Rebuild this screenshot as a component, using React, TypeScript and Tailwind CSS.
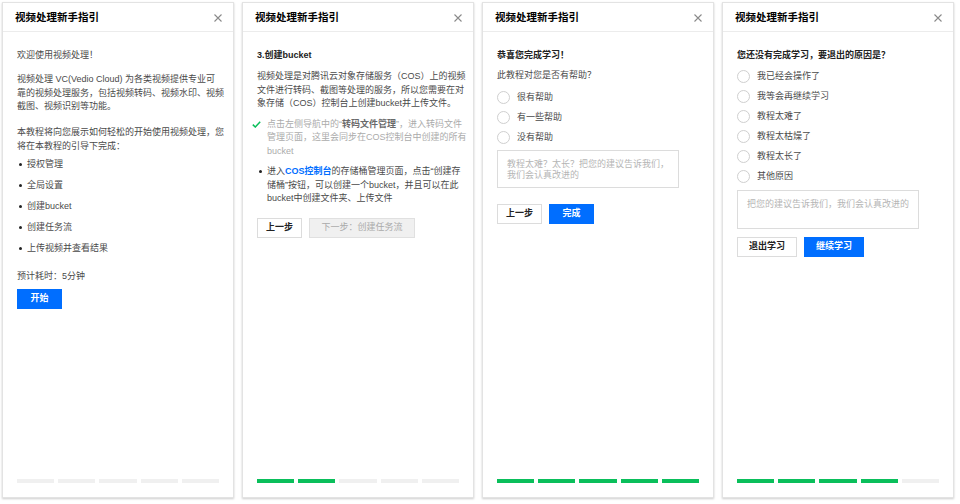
import { ReactNode } from 'react';

function CloseIcon() {
    return (
        <svg width="8" height="8" viewBox="0 0 8 8" className="shrink-0">
            <path d="M0.5 0.5 L7.5 7.5 M7.5 0.5 L0.5 7.5" stroke="#8a8a8a" strokeWidth="1.1" />
        </svg>
    );
}

function CheckIcon() {
    return (
        <svg width="9" height="7" viewBox="0 0 9 7">
            <path d="M0.8 3.6 L3.3 6 L8.2 0.8" fill="none" stroke="#0abf5b" strokeWidth="1.5" />
        </svg>
    );
}

function Panel({ done, children }: { done: number; children: ReactNode }) {
    return (
        <div className="flex h-[496px] w-[232px] flex-col border border-[#e3e3e3] bg-white shadow-[0_1px_2px_rgba(0,0,0,0.2)]">
            <div className="flex h-[29px] items-center justify-between border-b border-[#ececec] pl-[12px] pr-[11px] pt-[1px]">
                <span className="text-[10.5px] font-bold text-black">视频处理新手指引</span>
                <CloseIcon />
            </div>
            <div className="flex-1 px-[14px] pt-[17px] text-[9px] leading-[13.5px] text-[#4a4a4a]">{children}</div>
            <div className="flex gap-[4px] px-[14px] pb-[14px]">
                {[0, 1, 2, 3, 4].map((i) => (
                    <div key={i} className={`h-[4px] flex-1 ${i < done ? 'bg-[#0abf5b]' : 'bg-[#f0f0f0]'}`} />
                ))}
            </div>
        </div>
    );
}

function Bullet({ children, className = '' }: { children: ReactNode; className?: string }) {
    return (
        <div className={`flex ${className}`}>
            <span className="flex h-[13.5px] w-[10px] shrink-0 items-center">
                <span className="ml-[2px] h-[3px] w-[3px] rounded-full bg-[#222]" />
            </span>
            <div className="whitespace-nowrap">{children}</div>
        </div>
    );
}

function Radio({ label }: { label: string }) {
    return (
        <div className="flex h-[20px] items-center gap-[7px]">
            <span className="h-[13px] w-[13px] shrink-0 rounded-full border border-[#cfcfcf] bg-white" />
            <span>{label}</span>
        </div>
    );
}

function Btn({ children, primary, disabled, w }: { children: ReactNode; primary?: boolean; disabled?: boolean; w: string }) {
    let cls = 'border-[#dcdcdc] bg-white text-[#222] font-bold';
    if (primary) cls = 'border-[#006eff] bg-[#006eff] text-white font-bold';
    if (disabled) cls = 'border-[#e0e0e0] bg-[#f0f0f0] text-[#aaa]';
    return (
        <button className={`flex h-[20px] ${w} items-center justify-center border text-[9px] ${cls}`}>{children}</button>
    );
}

export default function App() {
    return (
        <div className="flex h-[504px] w-[960px] gap-[8px] bg-white pl-[2px] pt-[2px] font-['Liberation_Sans','Noto_Sans_CJK_SC',sans-serif]">
            <Panel done={0}>
                <p>欢迎使用视频处理！</p>
                <p className="mt-[10.5px] whitespace-nowrap">
                    视频处理 VC(Vedio Cloud) 为各类视频提供专业可<br />
                    靠的视频处理服务，包括视频转码、视频水印、视频<br />
                    截图、视频识别等功能。
                </p>
                <p className="mt-[12.5px] whitespace-nowrap">
                    本教程将向您展示如何轻松的开始使用视频处理，您<br />
                    将在本教程的引导下完成：
                </p>
                <Bullet className="mt-[5px]">授权管理</Bullet>
                <Bullet className="mt-[7.5px]">全局设置</Bullet>
                <Bullet className="mt-[7.5px]">创建bucket</Bullet>
                <Bullet className="mt-[7.5px]">创建任务流</Bullet>
                <Bullet className="mt-[7.5px]">上传视频并查看结果</Bullet>
                <p className="mt-[14.5px]">预计耗时：5分钟</p>
                <div className="mt-[5px]">
                    <Btn primary w="w-[45px]">开始</Btn>
                </div>
            </Panel>

            <Panel done={2}>
                <p className="font-bold text-[#222]">3.创建bucket</p>
                <p className="mt-[7.5px] whitespace-nowrap">
                    视频处理是对腾讯云对象存储服务（COS）上的视频<br />
                    文件进行转码、截图等处理的服务，所以您需要在对<br />
                    象存储（COS）控制台上创建bucket并上传文件。
                </p>
                <div className="mt-[7px] flex">
                    <span className="-ml-[5px] mr-[6px] flex h-[13.5px] w-[9px] shrink-0 items-center">
                        <CheckIcon />
                    </span>
                    <div className="whitespace-nowrap text-[#ababab]">
                        点击左侧导航中的“<span className="font-bold text-[#6a6a6a]">转码文件管理</span>”，进入转码文件<br />
                        管理页面，这里会同步在COS控制台中创建的所有<br />
                        bucket
                    </div>
                </div>
                <Bullet className="mt-[7px]">
                    进入<span className="font-bold text-[#006eff]">COS控制台</span>的存储桶管理页面，点击“创建存<br />
                    储桶”按钮，可以创建一个bucket，并且可以在此<br />
                    bucket中创建文件夹、上传文件
                </Bullet>
                <div className="mt-[12.5px] flex gap-[7px]">
                    <Btn w="w-[45px]">上一步</Btn>
                    <Btn disabled w="w-[106px]">下一步：创建任务流</Btn>
                </div>
            </Panel>

            <Panel done={5}>
                <p className="font-bold text-[#222]">恭喜您完成学习！</p>
                <p className="mt-[6.5px]">此教程对您是否有帮助？</p>
                <div className="mt-[5px]">
                    <Radio label="很有帮助" />
                    <Radio label="有一些帮助" />
                    <Radio label="没有帮助" />
                </div>
                <div className="mt-[2px] h-[38px] w-[182px] border border-[#dcdcdc] px-[9px] pt-[8px] leading-[11.5px] text-[#b5b5b5]">
                    教程太难？太长？把您的建议告诉我们，<br />
                    我们会认真改进的
                </div>
                <div className="mt-[16px] flex gap-[7px]">
                    <Btn w="w-[45px]">上一步</Btn>
                    <Btn primary w="w-[45px]">完成</Btn>
                </div>
            </Panel>

            <Panel done={4}>
                <p className="font-bold text-[#222]">您还没有完成学习，要退出的原因是？</p>
                <div className="mt-[4px]">
                    <Radio label="我已经会操作了" />
                    <Radio label="我等会再继续学习" />
                    <Radio label="教程太难了" />
                    <Radio label="教程太枯燥了" />
                    <Radio label="教程太长了" />
                    <Radio label="其他原因" />
                </div>
                <div className="mt-[3.5px] h-[39px] w-[182px] border border-[#dcdcdc] px-[9px] pt-[8px] leading-[11.5px] text-[#b5b5b5]">
                    把您的建议告诉我们，我们会认真改进的
                </div>
                <div className="mt-[7.5px] flex gap-[7px]">
                    <Btn w="w-[60px]">退出学习</Btn>
                    <Btn primary w="w-[60px]">继续学习</Btn>
                </div>
            </Panel>
        </div>
    );
}
